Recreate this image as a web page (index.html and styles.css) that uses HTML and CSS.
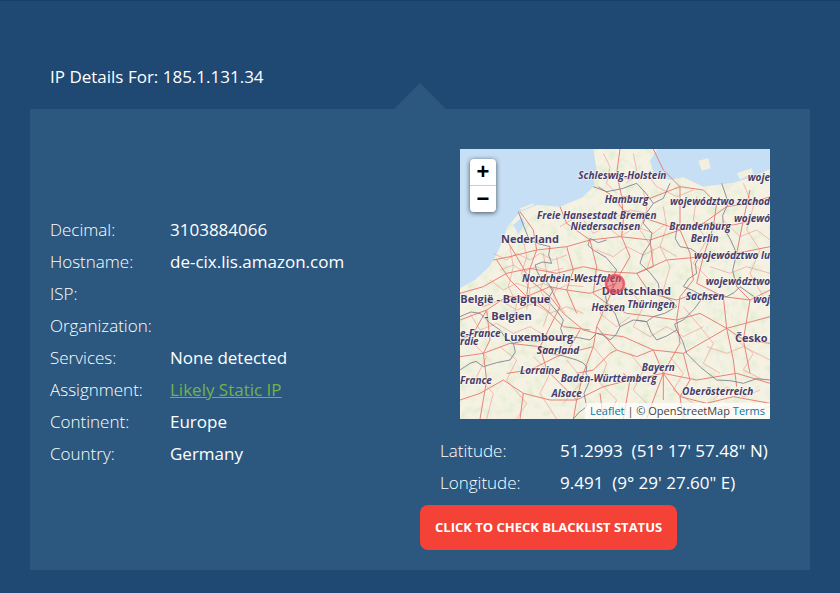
FILE: index.html
```html
<!DOCTYPE html>
<html lang="en">
<head>
    <meta charset="UTF-8">
    <title>IP Details</title>
    <link rel="stylesheet" href="styles.css">
</head>
<body>
    <section class="details">
        <h2 class="details-title">IP Details For: 185.1.131.34</h2>

        <div class="panel">
            <!-- left column: lookup results -->
            <div class="info">
                <div class="row"><span class="label">Decimal:</span><span class="value">3103884066</span></div>
                <div class="row"><span class="label">Hostname:</span><span class="value">de-cix.lis.amazon.com</span></div>
                <div class="row"><span class="label">ISP:</span><span class="value"></span></div>
                <div class="row"><span class="label">Organization:</span><span class="value"></span></div>
                <div class="row"><span class="label">Services:</span><span class="value">None detected</span></div>
                <div class="row"><span class="label">Assignment:</span><a class="value link" href="#">Likely Static IP</a></div>
                <div class="row"><span class="label">Continent:</span><span class="value">Europe</span></div>
                <div class="row"><span class="label">Country:</span><span class="value">Germany</span></div>
            </div>

            <!-- right column: map and coordinates -->
            <div class="geo">
                <div class="map">
                    <svg class="map-art" viewBox="30 27 930 810" width="310" height="270">
                        <defs>
                            <filter id="greens" x="0" y="0" width="100%" height="100%">
                                <feTurbulence type="fractalNoise" baseFrequency="0.04" numOctaves="4" seed="11"/>
                                <feColorMatrix type="matrix" values="0 0 0 0 0.74  0 0 0 0 0.84  0 0 0 0 0.62  0 2.2 0 0 -0.98"/>
                            </filter>
                            <clipPath id="landClip">
                                <path d="M30 445 L75 420 L120 378 L150 322 L172 262 L210 215 L262 195 L330 200 L398 172 L430 140 L440 90 L430 27 L622 27 L600 62 L612 104 L660 120 L700 112 L760 140 L850 128 L905 112 L960 88 L960 837 L30 837 Z"/>
                            </clipPath>
                        </defs>
                        <rect x="30" y="27" width="930" height="810" fill="#c6dff5"/>
                        <g clip-path="url(#landClip)">
                            <rect x="30" y="27" width="930" height="810" fill="#f5f2e4"/>
                            <rect x="30" y="27" width="930" height="810" filter="url(#greens)"/>
                        </g>
                        <path class="water" d="M190 255 L215 232 L226 250 L205 282 Z"/>
                        <path class="land-bit" d="M745 62 L775 55 L782 85 L755 92 Z"/>
                        <path class="land-bit" d="M210 205 L250 190 L252 196 L214 211 Z"/>
                        <path class="land-bit" d="M860 100 L905 85 L910 100 L870 118 Z"/>

                        <g class="minor">
                            <polyline points="130,340 170,360 200,340 240,360 270,340 310,360 350,345"/>
                            <polyline points="150,390 190,375 220,395 260,380 300,395 340,385"/>
                            <polyline points="120,420 160,450 200,430 240,445 280,430 320,450 350,435 400,440"/>
                            <polyline points="180,320 190,380 175,440 200,490 190,540"/>
                            <polyline points="220,300 230,350 215,400 240,450 230,510"/>
                            <polyline points="280,340 290,400 270,450 300,500 280,560"/>
                            <polyline points="320,350 330,410 310,470 345,520"/>
                            <polyline points="60,470 100,500 150,480 200,510 250,490 300,520 350,500 400,520"/>
                            <polyline points="60,520 90,570 140,550 190,580 240,560 290,590"/>
                            <polyline points="400,240 430,280 470,260 510,290 560,260 610,280 650,250"/>
                            <polyline points="330,260 380,230 430,220 480,240 540,210 590,220"/>
                            <polyline points="440,330 490,350 530,320 580,345 630,320 680,350"/>
                            <polyline points="580,150 590,210 570,270 610,330 590,390"/>
                            <polyline points="640,200 650,260 630,320 660,380 640,450"/>
                            <polyline points="740,170 730,240 770,300 730,370 780,420"/>
                            <polyline points="820,240 870,290 920,270 960,300"/>
                            <polyline points="780,380 840,400 890,380 960,400"/>
                            <polyline points="440,420 480,470 450,520 500,560 540,530"/>
                            <polyline points="540,450 580,500 550,560 600,590 650,560 700,590 760,560"/>
                            <polyline points="700,500 750,560 790,610 760,670 810,700"/>
                            <polyline points="860,600 910,640 880,690 940,720"/>
                            <polyline points="770,620 830,640 880,620 960,660"/>
                            <polyline points="430,620 470,670 450,730 500,780 470,837"/>
                            <polyline points="540,640 580,690 550,750 600,800 570,837"/>
                            <polyline points="660,650 700,700 670,750 730,790 700,837"/>
                            <polyline points="60,600 110,650 80,710 130,760 110,837"/>
                            <polyline points="150,620 200,660 170,720 230,790 200,837"/>
                            <polyline points="250,650 300,700 270,760 320,837"/>
                            <polyline points="350,660 400,720 340,790"/>
                            <polyline points="790,780 830,740 880,770 930,750"/>
                            <polyline points="760,820 820,800 890,820 960,800"/>
                            <polyline points="480,100 540,120 590,100 620,140 680,170 730,150"/>
                            <polyline points="880,130 910,200 890,270 930,330 900,400 940,470"/>
                            <polyline points="460,40 480,80 470,130 500,160"/>
                            <polyline points="550,40 560,90 530,130"/>
                        </g>
                        <g class="roads">
                            <polyline points="30,460 100,440 170,400 240,385 320,400 400,380 470,395 560,400 650,360 760,350 860,340 960,320"/>
                            <polyline points="130,360 180,350 260,330 350,320 420,300 510,290 600,300 690,270 760,250 850,255 960,230"/>
                            <polyline points="510,27 500,100 515,170 520,240 515,290 540,350 500,420 470,490 440,560 430,620 400,700 380,780 370,837"/>
                            <polyline points="445,140 490,170 520,210 600,240 690,270 720,340 730,420 690,470 680,540 690,610 640,700 640,780"/>
                            <polyline points="170,300 200,350 240,420 300,470 340,520 400,570 440,580 520,590 610,630 700,640 830,565 960,530"/>
                            <polyline points="140,360 180,420 230,470 300,440 350,450 420,460 500,430"/>
                            <polyline points="300,440 330,500 300,560 270,620 290,690 340,740 380,780"/>
                            <polyline points="30,540 110,510 170,470 240,470 290,510 340,560 420,570"/>
                            <polyline points="30,650 100,640 180,610 270,620 350,640 430,620"/>
                            <polyline points="30,780 90,760 160,720 220,760 300,780 380,780 460,740 540,720 640,700 740,720 860,700 960,730"/>
                            <polyline points="610,27 640,90 690,140 690,270"/>
                            <polyline points="690,140 760,150 800,190 790,260 760,350 740,430 820,470 830,565 850,660 860,740"/>
                            <polyline points="515,170 600,175 690,140"/>
                            <polyline points="560,400 600,460 680,480 740,460 820,470 900,480 960,450"/>
                            <polyline points="430,460 470,490 530,520 610,530 680,540 750,520 830,565"/>
                            <polyline points="830,565 880,600 960,610"/>
                            <polyline points="440,560 500,630 560,650 610,630 640,700 610,780 590,837"/>
                            <polyline points="640,700 690,770 770,790 850,770 960,790"/>
                            <polyline points="380,700 430,690 480,640 500,630"/>
                            <polyline points="170,700 240,690 320,650 350,640 390,570"/>
                            <polyline points="110,510 120,600 100,640 110,720 90,837"/>
                            <polyline points="220,760 210,837"/>
                            <polyline points="700,837 690,770 720,720 700,640"/>
                            <polyline points="860,340 880,240 900,150"/>
                            <polyline points="760,250 830,200 900,190 960,170"/>
                            <polyline points="600,300 610,380 560,400"/>
                            <polyline points="350,320 370,390 350,450 380,520"/>
                            <polyline points="260,330 240,385 230,470"/>
                            <polyline points="420,300 440,380 430,460"/>
                            <polyline points="210,215 250,270 260,330"/>
                            <polyline points="330,200 350,250 420,300"/>
                            <polyline points="30,600 70,580 110,510"/>
                            <polyline points="860,440 900,480 880,600 900,700"/>
                            <polyline points="520,700 540,720 520,837"/>
                            <polyline points="450,760 460,837"/>
                        </g>
                        <g class="borders">
                            <polyline points="205,215 222,260 238,300 268,312 300,320 296,345 305,370 278,366 255,375 262,395 270,410 292,428 310,450 298,470 300,490 322,515 340,540 332,565 340,590 380,592 420,600"/>
                            <polyline points="30,530 62,516 90,520 118,548 150,570 168,596 190,610 226,600 260,605 300,596 340,600"/>
                            <polyline points="190,610 196,636 180,660 140,668 100,680 78,664 60,670 30,690"/>
                            <polyline points="300,640 340,648 380,660 398,668 410,680 408,700 420,720 402,760 410,800 386,818 370,837"/>
                            <polyline points="430,140 470,155 516,146 560,130 588,160 610,190 590,218 580,250 606,280 600,310 580,340 570,370 600,398 625,430 628,452 640,470 662,480 680,500 644,520 610,530 590,545 560,540"/>
                            <polyline points="610,190 640,175 660,130"/>
                            <polyline points="680,270 676,296 690,320 722,326 750,345 736,372 740,400 716,416 700,440 730,452 760,470 732,508 700,540 674,552 680,570 698,604 710,640 752,682 800,720 840,722 880,730 920,716 960,720"/>
                            <polyline points="470,300 445,308 420,295 414,316 430,330 468,352 500,390 486,416 490,440 466,462 470,490 496,522 510,560 498,584 480,600 460,586 440,580 420,600"/>
                            <polyline points="760,470 796,462 830,470 852,458 870,440 912,470 960,490"/>
                            <polyline points="510,560 550,540 590,545 604,578 620,600 650,588 680,570"/>
                            <polyline points="815,130 826,162 835,190 818,226 820,260 842,300 860,340 848,392 860,440"/>
                        </g>
                        <g class="place">
                            <text x="517" y="116">Schleswig-Holstein</text>
                            <text x="530" y="190">Hamburg</text>
                            <text x="440" y="236">Freie Hansestadt Bremen</text>
                            <text x="466" y="270">Niedersachsen</text>
                            <text x="960" y="194" class="edge">województwo zachod</text>
                            <text x="750" y="270">Brandenburg</text>
                            <text x="764" y="305">Berlin</text>
                            <text x="960" y="358" class="edge">województwo lu</text>
                            <text x="365" y="425">Nordrhein-Westfalen</text>
                            <text x="960" y="435" class="edge">województwo</text>
                            <text x="765" y="481">Sachsen</text>
                            <text x="603" y="503">Thüringen</text>
                            <text x="475" y="514">Hessen</text>
                            <text x="960" y="124" class="edge">woje</text>
                            <text x="960" y="245" class="edge">wojewó</text>
                            <text x="960" y="490" class="edge">woj</text>
                            <text x="30" y="590" class="start">e-France</text>
                            <text x="30" y="616" class="start">rdie</text>
                            <text x="324" y="642">Saarland</text>
                            <text x="270" y="702">Lorraine</text>
                            <text x="476" y="726">Baden-Württemberg</text>
                            <text x="625" y="692">Bayern</text>
                            <text x="350" y="770">Alsace</text>
                            <text x="803" y="764">Oberösterreich</text>
                            <text x="30" y="733" class="start">France</text>
                        </g>
                        <g class="country">
                            <text x="240" y="309">Nederland</text>
                            <text x="559" y="466">Deutschland</text>
                            <text x="166" y="490">België - Belgique</text>
                            <text x="175" y="539">- Belgien</text>
                            <text x="266" y="603">Luxembourg</text>
                            <text x="904" y="605">Česko</text>
                        </g>
                        <circle class="marker" cx="495" cy="432" r="27"/>
                    </svg>
                    <div class="zoom-ctl">
                        <a class="zoom-btn" href="#">+</a>
                        <a class="zoom-btn" href="#">&minus;</a>
                    </div>
                    <div class="attribution"><a href="#">Leaflet</a> | © OpenStreetMap <a href="#">Terms</a></div>
                </div>

                <div class="coords">
                    <div class="row"><span class="label">Latitude:</span><span class="value">51.2993 &nbsp;(51° 17' 57.48" N)</span></div>
                    <div class="row"><span class="label">Longitude:</span><span class="value">9.491 &nbsp;(9° 29' 27.60" E)</span></div>
                </div>
                <a class="check-btn" href="#">Click to check blacklist status</a>
            </div>
        </div>
    </section>
</body>
</html>
```

FILE: styles.css
```css
body {
    margin: 0;
    background-color: #1f4872;
    font-family: 'Open Sans', sans-serif;
    color: #fff;
    height: 593px;
    overflow: hidden;
}

.details {
    padding: 63px 30px 0;
    border-top: 1px solid #1a3f66;
}

.details-title {
    margin: 0 0 0 20px;
    font-size: 17px;
    font-weight: 400;
    line-height: 26px;
    height: 45px;
}

.panel {
    position: relative;
    display: flex;
    height: 461px;
    background-color: #2c5880;
}

/* little arrow on top of the panel */
.panel::before {
    content: "";
    position: absolute;
    top: -26px;
    left: 364px;
    width: 0;
    height: 0;
    border-left: 26px solid transparent;
    border-right: 26px solid transparent;
    border-bottom: 26px solid #2c5880;
}

.info {
    width: 390px;
    box-sizing: border-box;
    padding: 105px 0 0 20px;
}

.row {
    display: flex;
    height: 32px;
    line-height: 32px;
    font-size: 17px;
}

.label {
    width: 120px;
    flex-shrink: 0;
    font-weight: 300;
}

.value {
    font-weight: 500;
}

.link {
    color: #6fb44a;
    font-weight: 400;
}

.geo {
    flex: 1;
    padding-top: 40px;
}

.map {
    position: relative;
    width: 310px;
    height: 270px;
    margin-left: 40px;
    overflow: hidden;
}

.map-art {
    display: block;
}

.water {
    fill: #c6dff5;
}

.land-bit {
    fill: #f3efdf;
}

.minor polyline {
    fill: none;
    stroke: #ee9f95;
    stroke-width: 2;
}

.roads polyline {
    fill: none;
    stroke: #ea8278;
    stroke-width: 3;
}

.borders polyline {
    fill: none;
    stroke: #7d7a8a;
    stroke-width: 2.5;
}

.place text,
.country text {
    font-family: 'Open Sans', sans-serif;
    font-weight: 700;
    fill: #483c68;
    stroke: rgba(255, 255, 255, 0.5);
    stroke-width: 5px;
    paint-order: stroke;
    text-anchor: middle;
}

.place text {
    font-size: 30px;
    font-style: italic;
}

.place .edge {
    text-anchor: end;
}

.place .start {
    text-anchor: start;
}

.country text {
    font-size: 33px;
}

.marker {
    fill: #e8414f;
    fill-opacity: 0.5;
    stroke: #e8414f;
    stroke-opacity: 0.75;
    stroke-width: 8;
}

.zoom-ctl {
    position: absolute;
    top: 10px;
    left: 10px;
    width: 26px;
    background-color: #fff;
    border-radius: 4px;
    box-shadow: 0 1px 5px rgba(0, 0, 0, 0.65);
}

.zoom-btn {
    display: block;
    height: 26px;
    line-height: 26px;
    text-align: center;
    font-family: 'Liberation Sans', sans-serif;
    font-size: 22px;
    font-weight: 700;
    color: #000;
    text-decoration: none;
}

.zoom-btn:first-child {
    border-bottom: 1px solid #ccc;
}

.attribution {
    position: absolute;
    right: 0;
    bottom: 0;
    padding: 0 5px;
    background-color: rgba(255, 255, 255, 0.7);
    font-size: 11px;
    line-height: 16px;
    color: #444;
}

.attribution a {
    color: #0078a8;
    text-decoration: none;
}

.coords {
    padding: 16px 0 0 20px;
}

.check-btn {
    display: inline-block;
    margin-top: 6px;
    padding: 0 15px;
    height: 45px;
    line-height: 45px;
    background-color: #f44336;
    border-radius: 8px;
    color: #fff;
    font-size: 13px;
    font-weight: 700;
    text-transform: uppercase;
    text-decoration: none;
}
```
